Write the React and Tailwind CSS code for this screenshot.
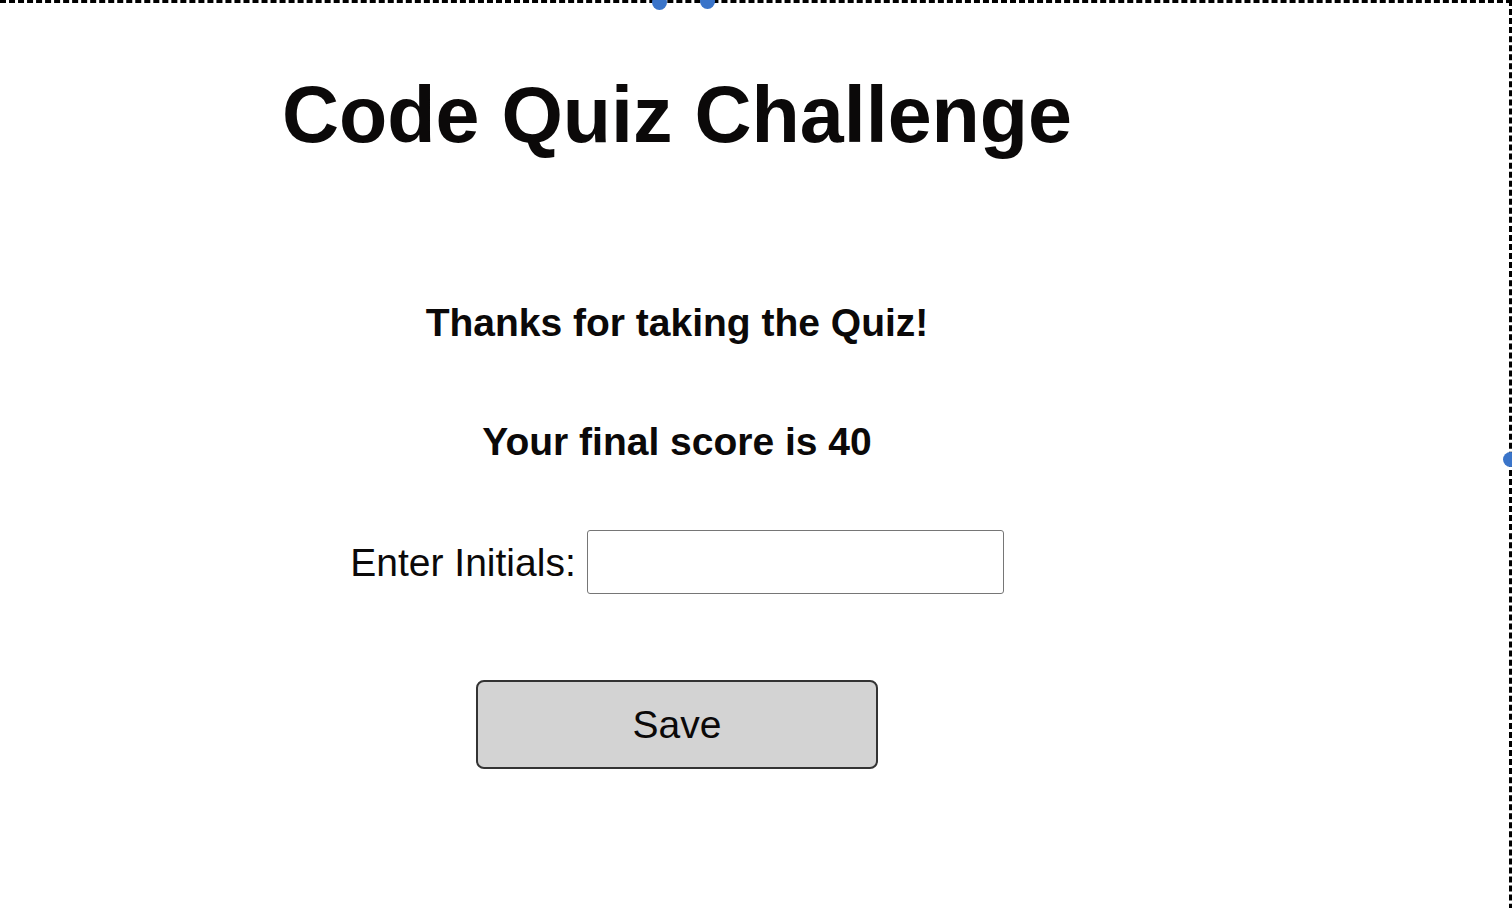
export default function App() {
  return (
    <div
      className="relative w-[1512px] h-[908px] overflow-hidden bg-white text-[#0b0909]"
      style={{ fontFamily: '"Liberation Sans", Arial, sans-serif' }}
    >
      <div className="w-[1512px] h-[1000px] border-t-[3px] border-r-[3px] border-dashed border-black">
        <div className="w-[1354px] flex flex-col items-center">
          <h1 className="mt-[72px] text-[79px] leading-none font-bold">Code Quiz Challenge</h1>
          <p className="mt-[149px] text-[39px] leading-none font-bold">Thanks for taking the Quiz!</p>
          <p className="mt-[80px] text-[39px] leading-none font-bold">Your final score is 40</p>
          <div className="mt-[69px] flex items-center gap-[11px]">
            <label className="text-[39px] leading-none">Enter Initials:</label>
            <input
              type="text"
              className="w-[417px] h-[64px] border border-[#767676] rounded-[3px] bg-white"
            />
          </div>
          <button className="mt-[86px] w-[402px] h-[89px] rounded-[8px] border-2 border-[#333] bg-[#d3d3d3] text-[39px] leading-none">
            Save
          </button>
        </div>
      </div>

      {/* selection handles */}
      <span className="absolute left-[652px] top-[-5px] w-[15px] h-[15px] rounded-full bg-[#3a74c9]" />
      <span className="absolute left-[700px] top-[-6px] w-[15px] h-[15px] rounded-full bg-[#3a74c9]" />
      <span className="absolute left-[1503px] top-[452px] w-[15px] h-[15px] rounded-full bg-[#3a74c9]" />
    </div>
  );
}
